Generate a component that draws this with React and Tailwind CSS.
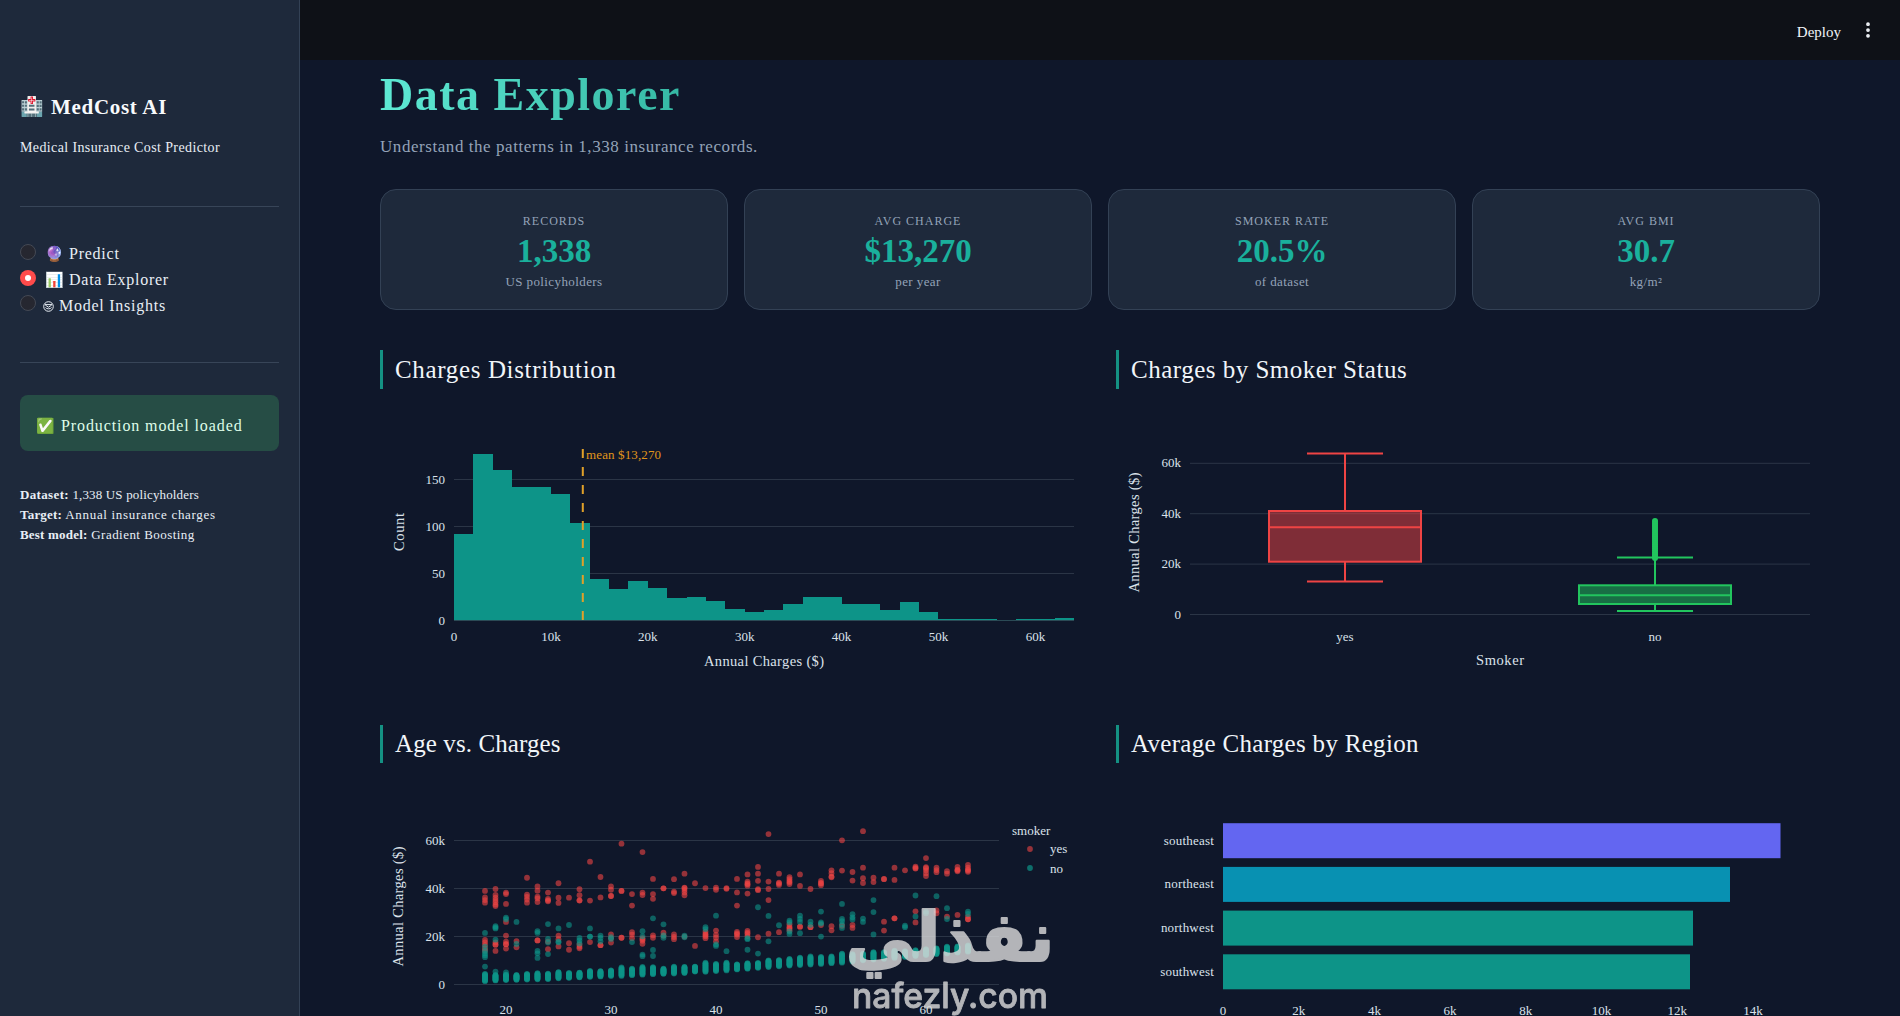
import { MoreVertical } from 'lucide-react';

const stats = [
  { label: 'Records', value: '1,338', note: 'US policyholders' },
  { label: 'Avg Charge', value: '$13,270', note: 'per year' },
  { label: 'Smoker Rate', value: '20.5%', note: 'of dataset' },
  { label: 'Avg BMI', value: '30.7', note: 'kg/m²' },
];

// number of policyholders in each $2k bin
const histogram = [
  92, 177, 160, 141, 142, 134, 103, 44, 33, 41, 34, 23, 25, 20, 12, 8,
  11, 17, 25, 25, 17, 17, 11, 19, 9, 1, 1, 1, 0, 1, 1, 2,
];

const regions = [
  { name: 'southeast', width: 557.5, color: '#6366f1' },
  { name: 'northeast', width: 507, color: '#0891b2' },
  { name: 'northwest', width: 470, color: '#0d9488' },
  { name: 'southwest', width: 467, color: '#0d9488' },
];

// age -> charges in thousands
const smokers = {
  18: [38.9, 36.2, 35.1, 34, 18.5, 17.5, 16.4, 15, 14],
  19: [39.7, 37.2, 36.1, 35.1, 34.2, 33.2, 32.6, 17.5, 16.5, 16.5, 13.9],
  20: [38.2, 37.6, 33.5, 26, 20.3, 17.8, 16.7, 16.7, 14.9],
  21: [18, 15.4],
  22: [44.4, 37.4, 36.4, 35.3, 34],
  23: [40.8, 39, 36.5, 35.8, 34.3, 18.3, 18.3],
  24: [38.2, 35.6, 35, 34.6, 17.8, 14.6],
  25: [42.1, 36.1, 33.9, 20.3, 18.8, 15.8],
  26: [36.1, 17.1, 14.4],
  27: [39.6, 37.1, 35, 34.9, 16.5, 15.6, 15],
  28: [51.1, 34.9, 17.6],
  29: [44.7, 36.2, 16.3, 16.3],
  30: [40.8, 39.4, 36.8, 36.8, 20.8, 19.2, 17.4],
  31: [58.6, 38.9, 38.9, 19.4, 19.4],
  32: [37.6, 32.8, 21.7, 20.7, 19.2],
  33: [55.1, 38.2, 37.2, 19.2, 18.7, 18.1, 16.9],
  34: [43.9, 37.6, 35.6, 20.4, 19.4],
  35: [40, 40, 21.5, 20.2],
  36: [43.8, 38.6, 38, 20.8, 19.7, 18.8],
  37: [46.1, 40.3, 40.1, 39.3, 38.3, 37.1, 19.9],
  38: [42.1, 16],
  39: [40.1, 21.9, 21, 20.6, 20, 19.2],
  40: [40.3, 39.4, 22.4, 20.6, 19.4, 17.9],
  41: [40.1, 39.8],
  42: [43.9, 38.3, 32.8, 21.8, 21.2, 20.7, 19.7],
  43: [45.8, 42.8, 42, 41.7, 41.1, 37.8, 22.2, 21.5, 21, 20.1],
  44: [48.9, 46.1, 43.1, 39.6, 39.2, 19.6],
  45: [62.6, 42.8, 39.7, 35.1, 21.1],
  46: [46.1, 42.4, 42, 41.4, 21.7],
  47: [44.6, 43.8, 43, 42.5, 41.8, 25, 24, 23.5, 23.1, 22.4],
  48: [45.8, 41, 24, 24],
  49: [39.7, 23.8, 23.8],
  50: [43.1, 42.2, 42, 41.3, 24.7],
  51: [47.5, 46.3, 44.9, 44.6, 24.2, 22.5],
  52: [60, 47.4, 24.4],
  53: [46.8, 43.2, 24.7, 23.5],
  54: [63.8, 48.6, 44.2, 42.2],
  55: [44.4, 42.6],
  56: [43.9, 43.8, 26.1, 22.4],
  57: [48.6, 43.5, 27.5, 27.5],
  58: [47.5],
  59: [49, 48.5, 48.2, 30.4, 25.8],
  60: [52.6, 48.8, 48.4, 47.5, 46.3, 45.1],
  61: [48.6, 47.6, 46.7, 30.8, 29.6],
  62: [47.1, 46.1, 28.2],
  63: [48.9, 47.8, 47.5, 47.1, 28.9],
  64: [49.7, 48.6, 47.8, 47.4, 46.9, 28.2, 27.1, 27.1],
};

const nonSmokers = {
  18: [21.4, 15.7, 14, 12.9, 12.1, 11.3, 7.4],
  19: [24.2, 23.7, 23.3, 18.6, 5.3],
  20: [27.8, 27.1, 5],
  21: [26, 16.8],
  23: [22.1, 21.4, 13.9, 12.9, 11],
  24: [25.1, 18.9, 17.4, 12.6],
  25: [23.3, 17.8, 17.5],
  26: [24.7],
  27: [19.3, 18.3, 17],
  28: [23.3, 19.9, 19.9],
  29: [20.3, 19.3, 17.9],
  30: [19.6, 18.9],
  32: [17.6],
  33: [22.1, 20, 12.4, 11.7],
  34: [27.5, 14.3, 11.8],
  35: [25, 20.4, 19.4],
  37: [20.3, 19.6],
  39: [23.8, 23],
  40: [28.6, 16.6, 16],
  41: [13.8],
  43: [19.2, 18.8, 14.4],
  44: [32.1, 12.8],
  45: [28.5, 17.9],
  46: [24.6],
  47: [26.5, 25.8, 22, 21],
  48: [28.6, 27.2, 26, 21.3],
  49: [26.1, 24.8],
  50: [30.3, 25.8, 25.3, 19.9],
  52: [33.5, 27.2, 26.3, 25, 23.5],
  53: [29.2, 27.9, 27],
  54: [27.4, 26],
  55: [35.1, 30.1, 20.8],
  58: [24.4, 23.8],
  59: [37, 28.3],
  60: [30.3, 29.6],
  61: [36.7],
  62: [31.7, 27.2],
  64: [30.3, 29.3],
};

// the dense band of low cost policyholders, [min, max] for ages 18 to 64
const baseBand = [
  [1.3, 4.3], [1.6, 3.9], [1.8, 4], [1.9, 3.9], [2, 4.3], [2.1, 4.6], [2.2, 4.4],
  [2.5, 5.1], [2.7, 4.7], [2.9, 4.9], [3.1, 5.6], [3.3, 5.5], [3.5, 5.8], [3.5, 7],
  [3.8, 6.5], [4, 7.2], [4.2, 7.1], [4.4, 6.5], [4.5, 7.4], [4.7, 7.3], [5.3, 7.4],
  [5.2, 9], [5.5, 8.5], [5.8, 9], [6.2, 8.3], [6.5, 8.8], [6.9, 8.9], [7.2, 10],
  [7.5, 10.1], [7.8, 10.6], [8, 11.1], [8.2, 11.6], [8.5, 11.4], [8.8, 11.6],
  [9, 12.8], [9.5, 12.6], [10, 12.8], [10.3, 13.4], [10.6, 13.4], [11, 14],
  [11.4, 13.8], [11.8, 14.2], [12.2, 14.6], [12.6, 15], [12.8, 15.7], [13.2, 15.8],
  [13.6, 16.2],
];

const ageX = (age) => 105 + (age - 18) * 10.5;
const chargeY = (k) => 221.3 - k * 2.4;

const chartText = 'font-["Liberation_Serif",serif] fill-[#dbe2ea]';

function YTick({ x, y, children }) {
  return (
    <text x={x} y={y + 4} textAnchor="end" fontSize="13">
      {children}
    </text>
  );
}

function YTitle({ x, y, length, children }) {
  return (
    <text
      transform={`translate(${x} ${y}) rotate(-90)`}
      textAnchor="middle"
      fontSize="14.5"
      textLength={length}
    >
      {children}
    </text>
  );
}

function Sidebar() {
  return (
    <aside className="w-[300px] shrink-0 bg-[#1e293b] border-r border-[#334155] pl-5 pr-5 pt-[93px] text-[#e8eef5]">
      <div className="flex items-center leading-7">
        <span className="w-[31px] text-[19px]">🏥</span>
        <h3 className="text-[21px] font-bold tracking-[0.7px] leading-7 text-slate-50">MedCost AI</h3>
      </div>
      <p className="mt-[17px] text-sm leading-5 tracking-[0.38px] whitespace-nowrap">
        Medical Insurance Cost Predictor
      </p>
      <hr className="mt-12 border-[#384558]" />

      <nav className="mt-[34px] text-base leading-[26px] tracking-[0.75px]">
        <div className="flex h-[26px]">
          <span className="mt-[3px] size-4 rounded-full bg-[#262730] border border-[#444954]" />
          <span className="ml-[9px] w-6 text-[15px] tracking-normal">🔮</span>
          <span>Predict</span>
        </div>
        <div className="flex h-[26px]">
          <span className="mt-[3px] size-4 rounded-full bg-[#ff4b4b] flex items-center justify-center">
            <span className="size-[6px] rounded-full bg-white" />
          </span>
          <span className="ml-[9px] w-6 text-[15px] tracking-normal">📊</span>
          <span>Data Explorer</span>
        </div>
        <div className="flex h-[26px]">
          <span className="mt-[2px] size-4 rounded-full bg-[#262730] border border-[#444954]" />
          <svg className="ml-[7px] mt-2 mr-[5px]" width="11" height="11" viewBox="0 0 11 11" fill="none" stroke="#e8eef5">
            <circle cx="5.5" cy="5.5" r="4.8" />
            <path d="M2 3.6h7M2.4 4.2l3.1 2l3.1-2M2.5 6.5c1 1.8 5 1.8 6 0" />
          </svg>
          <span>Model Insights</span>
        </div>
      </nav>
      <hr className="mt-[43px] border-[#384558]" />

      <div className="mt-8 h-14 rounded-lg bg-[#264d45] flex pl-[16px] pt-[19px] leading-6 text-[#dffde9]">
        <span className="w-[25px] text-[15px]">✅</span>
        <span className="tracking-[0.9px] whitespace-nowrap">Production model loaded</span>
      </div>

      <div className="mt-[34px] text-[13px] leading-5 whitespace-nowrap">
        <p className="tracking-[0.15px]">
          <strong className="tracking-[0.35px]">Dataset:</strong> 1,338 US policyholders
        </p>
        <p className="tracking-[0.68px]">
          <strong className="tracking-[0.2px]">Target:</strong> Annual insurance charges
        </p>
        <p className="tracking-[0.46px]">
          <strong className="tracking-[0.2px]">Best model:</strong> Gradient Boosting
        </p>
      </div>
    </aside>
  );
}

function StatCard({ label, value, note }) {
  return (
    <div className="h-[121px] rounded-2xl bg-[#1e293b] border border-[#334155] pt-[23px] text-center text-[#94a3b8]">
      <p className="text-xs leading-4 uppercase tracking-[1px]">{label}</p>
      <p className="mt-1 text-[33px] leading-9 font-bold text-[#1ab09c]">{value}</p>
      <p className="mt-1 text-[13px] leading-[18px] tracking-[0.4px]">{note}</p>
    </div>
  );
}

function SectionTitle({ className, children }) {
  return (
    <h2 className={`border-l-3 border-[#149183] pl-3 text-[25px] text-slate-100 whitespace-nowrap ${className}`}>
      {children}
    </h2>
  );
}

function ChargesHistogram() {
  return (
    <svg width="704" height="336" className={`block ${chartText}`}>
      {[0, 50, 100, 150].map((n) => (
        <g key={n}>
          <line x1="74" x2="694" y1={231.5 - n * 0.94} y2={231.5 - n * 0.94} stroke="#2b3546" />
          <YTick x={65} y={231.5 - n * 0.94}>{n}</YTick>
        </g>
      ))}
      <g fill="#0d9488" shapeRendering="crispEdges">
        {histogram.map((n, i) => (
          <rect key={i} x={74 + i * 19.375} y={231 - n * 0.94} width="19.375" height={n * 0.94} />
        ))}
      </g>
      <line x1="74" x2="694" y1="231.5" y2="231.5" stroke="#2b4a55" />
      <line x1="202.8" x2="202.8" y1="60" y2="231" stroke="#e0a029" strokeWidth="2" strokeDasharray="9 9" />
      <text x="206" y="70" fontSize="13" textLength="75" className="fill-[#e0961a]">mean $13,270</text>
      {['0', '10k', '20k', '30k', '40k', '50k', '60k'].map((t, i) => (
        <text key={t} x={74 + i * 96.9} y="252" fontSize="13" textAnchor="middle">{t}</text>
      ))}
      <text x="384" y="276.5" fontSize="14.5" textAnchor="middle" textLength="120">Annual Charges ($)</text>
      <YTitle x={24} y={143} length={38}>Count</YTitle>
    </svg>
  );
}

function BoxPlot({ x, color, max, q3, median, q1, min }) {
  return (
    <g stroke={color} strokeWidth="2" fill="none">
      <path d={`M${x - 38} ${max}h76M${x} ${max}V${q3}M${x} ${q1}V${min}M${x - 38} ${min}h76`} />
      <rect x={x - 76} y={q3} width="152" height={q1 - q3} fill={color} fillOpacity="0.5" />
      <path d={`M${x - 76} ${median}h152`} />
    </g>
  );
}

function SmokerBoxes() {
  const outliers = Array.from({ length: 20 }, (_, i) => 132 + i * 1.95);
  return (
    <svg width="704" height="336" className={`block ${chartText}`}>
      {['0', '20k', '40k', '60k'].map((t, i) => (
        <g key={t}>
          <line x1="74" x2="694" y1={225.5 - i * 50.4} y2={225.5 - i * 50.4} stroke="#2b3546" />
          <YTick x={65} y={225.5 - i * 50.4}>{t}</YTick>
        </g>
      ))}
      <BoxPlot x={229} color="#ef4444" max={64.5} q3={122} median={138.3} q1={172.7} min={192.5} />
      <BoxPlot x={539} color="#22c55e" max={168.5} q3={196.3} median={206.3} q1={215} min={222} />
      {outliers.map((y) => (
        <circle key={y} cx="539" cy={y} r="3" fill="#22c55e" />
      ))}
      <text x="229" y="252" fontSize="13" textAnchor="middle">yes</text>
      <text x="539" y="252" fontSize="13" textAnchor="middle">no</text>
      <text x="384" y="276" fontSize="14.5" textAnchor="middle" textLength="48">Smoker</text>
      <YTitle x={23} y={143.5} length={120}>Annual Charges ($)</YTitle>
    </svg>
  );
}

function Dots({ data, color }) {
  return (
    <g fill={color} fillOpacity="0.6">
      {Object.entries(data).map(([age, list]) =>
        list.map((k, i) => <circle key={`${age}-${i}`} cx={ageX(age)} cy={chargeY(k)} r="2.9" />)
      )}
    </g>
  );
}

function AgeScatter() {
  const band = {};
  baseBand.forEach(([min, max], i) => {
    const steps = 14;
    band[18 + i] = Array.from({ length: steps + 1 }, (_, s) => min + ((max - min) * s) / steps);
  });
  return (
    <svg width="704" height="253" className={`block ${chartText}`}>
      {['0', '20k', '40k', '60k'].map((t, i) => (
        <g key={t}>
          <line x1="74" x2="619" y1={221.5 - i * 48} y2={221.5 - i * 48} stroke="#2b3546" />
          <YTick x={65} y={221.5 - i * 48}>{t}</YTick>
        </g>
      ))}
      <Dots data={smokers} color="#ef4444" />
      <Dots data={nonSmokers} color="#0d9488" />
      <Dots data={band} color="#0d9488" />
      {[20, 30, 40, 50, 60].map((age) => (
        <text key={age} x={ageX(age)} y="251" fontSize="13" textAnchor="middle">{age}</text>
      ))}
      <text x="632" y="72" fontSize="13">smoker</text>
      <circle cx="650" cy="86" r="2.9" fill="#ef4444" fillOpacity="0.6" />
      <text x="670" y="90" fontSize="13">yes</text>
      <circle cx="650" cy="105" r="2.9" fill="#0d9488" fillOpacity="0.7" />
      <text x="670" y="109.5" fontSize="13">no</text>
      <YTitle x={23} y={143.5} length={120}>Annual Charges ($)</YTitle>
    </svg>
  );
}

function RegionBars() {
  return (
    <svg width="704" height="253" className={`block ${chartText}`}>
      {regions.map((r, i) => (
        <g key={r.name}>
          <rect x="107" y={60.2 + i * 43.7} width={r.width} height="35" fill={r.color} />
          <text x="98" y={81.5 + i * 43.7} fontSize="13" letterSpacing="0.2" textAnchor="end">{r.name}</text>
        </g>
      ))}
      {['0', '2k', '4k', '6k', '8k', '10k', '12k', '14k'].map((t, i) => (
        <text key={t} x={107 + i * 75.7} y="251.5" fontSize="13" textAnchor="middle">{t}</text>
      ))}
    </svg>
  );
}

function Watermark() {
  return (
    <svg
      className="absolute left-[840px] top-[896px] fill-[#dcdcdc] stroke-[#dcdcdc] opacity-80"
      width="220"
      height="120"
      strokeLinejoin="round"
    >
      {/* squashed a little so the letters sit wide and low */}
      <text
        transform="translate(110 65) scale(1.22 0.86)"
        fontSize="80"
        fontWeight="bold"
        strokeWidth="2.5"
        textAnchor="middle"
        direction="rtl"
        textLength="171"
        lengthAdjust="spacingAndGlyphs"
        className="font-['DejaVu_Sans',sans-serif]"
      >
        نفذلي
      </text>
      <text
        x="12"
        y="111.5"
        fontSize="35"
        fontWeight="500"
        strokeWidth="0.8"
        textLength="196"
        lengthAdjust="spacingAndGlyphs"
        className="font-['Inter',sans-serif]"
      >
        nafezly.com
      </text>
    </svg>
  );
}

export default function App() {
  return (
    <div className='relative flex h-screen overflow-hidden bg-[#0f172a] font-["Liberation_Serif",serif]'>
      <Sidebar />

      <div className="flex-1 min-w-0">
        <header className="h-[60px] bg-[#0e1117] flex items-center justify-end pr-[22px] text-slate-100">
          <span className="text-[15px] pt-1 mr-[17px]">Deploy</span>
          <MoreVertical size={20} strokeWidth={2.5} />
        </header>

        <main className="px-20 pt-[7px]">
          <h1 className="w-fit bg-linear-to-r from-[#5eead4] to-[#35b8a4] bg-clip-text text-transparent text-[46px] leading-[56px] font-bold tracking-[1.5px]">
            Data Explorer
          </h1>
          <p className="mt-3 text-[17px] leading-6 tracking-[0.56px] text-[#94a3b8]">
            Understand the patterns in 1,338 insurance records.
          </p>

          <div className="mt-[30px] grid grid-cols-4 gap-4">
            {stats.map((s) => (
              <StatCard key={s.label} {...s} />
            ))}
          </div>

          <div className="mt-10 grid grid-cols-2 gap-x-8">
            <section>
              <SectionTitle className="leading-[39px] tracking-[0.65px]">Charges Distribution</SectionTitle>
              <ChargesHistogram />
            </section>
            <section>
              <SectionTitle className="leading-[39px] tracking-[0.5px]">Charges by Smoker Status</SectionTitle>
              <SmokerBoxes />
            </section>
            <section>
              <SectionTitle className="leading-[38px] tracking-[0.1px]">Age vs. Charges</SectionTitle>
              <AgeScatter />
            </section>
            <section>
              <SectionTitle className="leading-[38px] tracking-[0.3px]">Average Charges by Region</SectionTitle>
              <RegionBars />
            </section>
          </div>
        </main>
      </div>

      <Watermark />
    </div>
  );
}
